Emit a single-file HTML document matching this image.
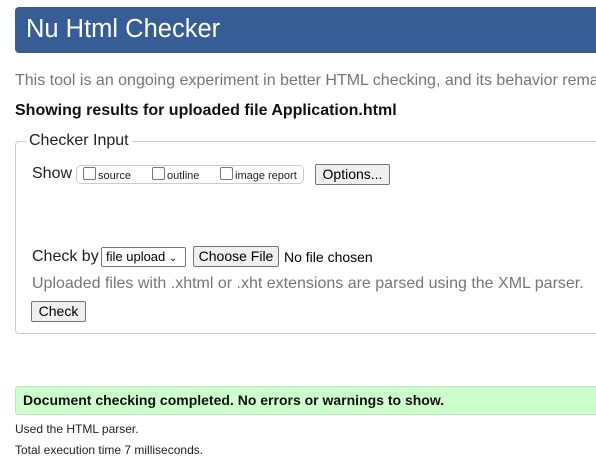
<!DOCTYPE html>
<html><head><style>
body{margin:0;width:596px;height:465px;overflow:hidden;background:#fff;font-family:"Liberation Sans",Arial,sans-serif;position:relative}
.a{position:absolute;white-space:nowrap}
.btn{position:absolute;background:#efefef;border:1px solid #767676;border-radius:2px;font-size:13px;color:#000;text-align:center;box-sizing:border-box;line-height:18px}
.cb{display:inline-block;width:11px;height:11px;border:1px solid #767676;border-radius:2px;vertical-align:-1px;margin-right:2px;background:#fff}
</style></head><body>
<div class="a" style="left:15px;top:7px;width:600px;height:46px;background:#365d95;border-radius:4px"></div>
<div class="a" style="left:26px;top:15px;font-size:25.5px;color:#fff">Nu Html Checker</div>
<div class="a" style="left:15px;top:72px;font-size:16px;color:#777">This tool is an ongoing experiment in better HTML checking, and its behavior remains</div>
<div class="a" style="left:15px;top:102px;font-size:16px;font-weight:bold;color:#111">Showing results for uploaded file Application.html</div>
<div class="a" style="left:15px;top:141px;width:600px;height:193px;border:1px solid #ccc;border-radius:4px;box-sizing:border-box"></div>
<div class="a" style="left:26px;top:132px;padding:0 3px;background:#fff;font-size:16px;color:#222">Checker Input</div>
<div class="a" style="left:32px;top:165px;font-size:16px;color:#222">Show</div>
<div class="a" style="left:76px;top:165px;width:228px;height:19px;border:1px solid #ccc;border-radius:5px;box-sizing:border-box"></div>
<div class="a" style="left:83px;top:167px;font-size:11px;color:#222"><span class="cb"></span>source</div>
<div class="a" style="left:152px;top:167px;font-size:11px;color:#222"><span class="cb"></span>outline</div>
<div class="a" style="left:220px;top:167px;font-size:11px;color:#222"><span class="cb"></span>image report</div>
<div class="btn" style="left:315px;top:164px;width:75px;height:21px;font-size:14px">Options...</div>
<div class="a" style="left:32px;top:248px;font-size:16px;color:#222">Check by</div>
<div class="a" style="left:101px;top:247px;width:85px;height:20px;border:1px solid #767676;border-radius:2px;box-sizing:border-box;font-size:13px;line-height:18px;padding-left:4px">file upload <span style="font-size:10px">&#8964;</span></div>
<div class="btn" style="left:193px;top:246px;width:86px;height:21px;font-size:14px">Choose File</div>
<div class="a" style="left:284px;top:249px;font-size:14px;color:#000">No file chosen</div>
<div class="a" style="left:32px;top:275px;font-size:16px;color:#777">Uploaded files with .xhtml or .xht extensions are parsed using the XML parser.</div>
<div class="btn" style="left:31px;top:301px;width:55px;height:21px;font-size:14px">Check</div>
<div class="a" style="left:15px;top:386px;width:600px;height:29px;background:#ccffcc;border:1px solid #bde5bd;border-radius:3px;box-sizing:border-box"></div>
<div class="a" style="left:23px;top:392px;font-size:14px;font-weight:bold;color:#111">Document checking completed. No errors or warnings to show.</div>
<div class="a" style="left:15px;top:422px;font-size:12px;color:#222">Used the HTML parser.</div>
<div class="a" style="left:15px;top:443px;font-size:12px;color:#222">Total execution time 7 milliseconds.</div>
</body></html>
